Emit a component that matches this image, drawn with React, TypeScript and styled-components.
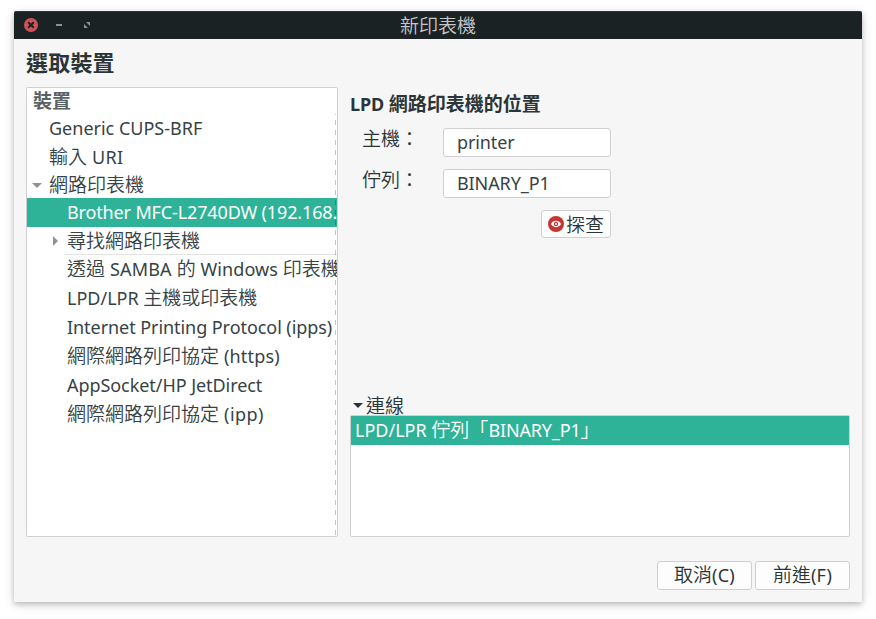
import React from "react";
import styled, { createGlobalStyle } from "styled-components";

const GlobalStyle = createGlobalStyle`
  * { box-sizing: border-box; }
  html, body { margin: 0; background: #fff; }
  body {
    font-family: "Noto Sans", "Noto Sans CJK TC", sans-serif;
    font-size: 18px;
    color: #2b3538;
    overflow: hidden;
  }
`;

const Desktop = styled.div`
  width: 876px;
  height: 619px;
  padding: 11px 14px 17px;
`;
const Window = styled.main`
  height: 591px;
  background: #f6f6f6;
  border-radius: 2px 2px 0 0;
  box-shadow: 0 2px 5px rgba(0, 0, 0, 0.2), 0 3px 12px rgba(0, 0, 0, 0.13);
  display: flex;
  flex-direction: column;
`;
const TitleBar = styled.header`
  height: 28px;
  flex: none;
  background: #1b2224;
  border-top: 1px solid #303739;
  border-radius: 2px 2px 0 0;
  display: grid;
  grid-template-columns: 96px 1fr 96px;
  align-items: center;
`;
const Controls = styled.div`
  display: flex;
  align-items: center;
  padding: 0 0 1px 9px;
  svg { display: block; }
`;
const Title = styled.div`
  text-align: center;
  line-height: 27px;
`;

/* CJK runs are drawn a little larger than the Latin ones beside them. */
const Text = styled.span<{ $size?: number; $track?: number; $shift?: number; $weight?: number; $color?: string }>`
  display: inline-block;
  white-space: pre;
  line-height: inherit;
  font-size: ${(p) => p.$size ?? 19}px;
  letter-spacing: ${(p) => p.$track ?? 0}px;
  font-weight: ${(p) => p.$weight ?? (p.$size ? 400 : 350)};
  color: ${(p) => p.$color ?? "inherit"};
  transform: ${(p) => (p.$shift ? `translateY(${p.$shift}px)` : "none")};
`;

const Content = styled.div`
  flex: 1;
  padding: 9px 12px 12px;
  display: flex;
  flex-direction: column;
`;
const Heading = styled.h1`
  margin: 0;
  height: 39px;
  font-size: 22px;
  line-height: 28px;
  letter-spacing: 0.2px;
  font-weight: 700;
`;
const Columns = styled.div`
  display: grid;
  grid-template-columns: 312px 500px;
  column-gap: 12px;
  height: 450px;
`;
const Tree = styled.section`
  position: relative;
  border: 1px solid #d0d0d0;
  border-radius: 2px;
  background: #fff;
  overflow: hidden;
`;
const TreeHeader = styled.div`
  height: 26px;
  line-height: 26px;
  padding-left: 6px;
  color: #596366;
`;
const TreeRow = styled.div<{ $h: number; $depth: number; $selected?: boolean; $ruled?: boolean }>`
  position: relative;
  height: ${(p) => p.$h}px;
  line-height: ${(p) => p.$h}px;
  display: flex;
  white-space: pre;
  padding-left: ${(p) => (p.$depth ? 22 : 4)}px;
  color: ${(p) => (p.$selected ? "#fff" : "#364245")};
  background: ${(p) => (p.$selected ? "#2eb398" : "transparent")};
  &::after {
    content: ${(p) => (p.$ruled ? '""' : "none")};
    position: absolute;
    left: 38px;
    right: 0;
    bottom: 0;
    border-bottom: 1px solid #e3e3e3;
  }
`;
const Arrow = styled.span`
  width: 18px;
  flex: none;
  display: flex;
  align-items: center;
`;
const DropGuide = styled.div`
  position: absolute;
  top: 26px;
  right: 1px;
  bottom: 0;
  width: 1px;
  background: repeating-linear-gradient(to bottom, rgba(0, 0, 0, 0.22) 0 5px, transparent 5px 10px);
  background-position: 0 -4px;
  background-size: 1px 10px;
`;

const Detail = styled.section`
  display: flex;
  flex-direction: column;
`;
const SectionTitle = styled.h2`
  margin: 0;
  height: 41px;
  line-height: 34px;
  font-size: 18px;
  font-weight: 700;
`;
const Field = styled.label`
  display: grid;
  grid-template-columns: 81px 168px;
  height: 29px;
  margin: 0 0 12px 12px;
  line-height: 22px;
`;
const Input = styled.div`
  border: 1px solid #d0d0d0;
  border-radius: 3px;
  background: #fff;
  padding-left: 13px;
  line-height: 27px;
  color: #364245;
`;
const Button = styled.button<{ $w: number; $h: number }>`
  width: ${(p) => p.$w}px;
  height: ${(p) => p.$h}px;
  padding: 0;
  border: 1px solid #d0d0d0;
  border-radius: 3px;
  background: #fdfdfd;
  color: #2b3538;
  font: inherit;
  line-height: 27px;
  display: flex;
  align-items: center;
  justify-content: center;
`;
const ProbeRow = styled.div`
  width: 261px;
  display: flex;
  justify-content: flex-end;
  button { gap: 2px; }
`;
const Expander = styled.div`
  margin-top: auto;
  height: 21px;
  padding-left: 2px;
  display: flex;
  align-items: center;
  line-height: 21px;
  gap: 2px;
`;
const Connections = styled.div`
  height: 122px;
  border: 1px solid #d0d0d0;
  border-radius: 2px;
  background: #fff;
`;
const Connection = styled.div`
  height: 29px;
  line-height: 29px;
  padding-left: 4px;
  background: #2eb398;
  color: #fff;
  white-space: pre;
  display: flex;
`;
const Actions = styled.footer`
  margin-top: 24px;
  display: flex;
  justify-content: flex-end;
  gap: 3px;
`;

type Run = [text: string, size?: number, track?: number];
type Row = { runs: Run[]; h: number; depth: 0 | 1; arrow?: "down" | "right"; selected?: boolean; ruled?: boolean; shift?: number };

const rows: Row[] = [
  { runs: [["Generic CUPS-BRF", 18]], h: 29, depth: 0 },
  { runs: [["輸入"], [" URI", 18, 0.3]], h: 28, depth: 0 },
  { runs: [["網路印表機"]], h: 27, depth: 0, arrow: "down", shift: 1 },
  { runs: [["Brother MFC-L2740DW (192.168.", 18, -0.14]], h: 29, depth: 1, selected: true },
  { runs: [["尋找網路印表機"]], h: 28, depth: 1, arrow: "right", ruled: true },
  { runs: [["透過"], [" SAMBA ", 18, 0.2], ["的"], [" Windows ", 18, 0.1], ["印表機"]], h: 29, depth: 1 },
  { runs: [["LPD/LPR ", 18], ["主機或印表機"]], h: 29, depth: 1 },
  { runs: [["Internet Printing Protocol (ipps)", 18, -0.06]], h: 29, depth: 1 },
  { runs: [["網際網路列印協定"], [" (https)", 18, 0.2]], h: 29, depth: 1 },
  { runs: [["AppSocket/HP JetDirect", 18, -0.06]], h: 29, depth: 1 },
  { runs: [["網際網路列印協定"], [" (ipp)", 18, 0.4]], h: 29, depth: 1 },
];

function Runs({ runs, shift, weight }: { runs: Run[]; shift?: number; weight?: number }) {
  return (
    <>
      {runs.map(([text, size, track], i) => (
        <Text key={i} $size={size} $track={track} $shift={shift} $weight={weight}>{text}</Text>
      ))}
    </>
  );
}

function Triangle({ dir, color }: { dir: "down" | "right"; color: string }) {
  return (
    <svg width="12" height="12" viewBox="0 0 12 12" fill={color}>
      <path d={dir === "down" ? "M1 4h10L6 9z" : "M4 1v10l5-5z"} />
    </svg>
  );
}

export default function App() {
  return (
    <>
      <GlobalStyle />
      <Desktop>
        <Window>
          <TitleBar>
            <Controls>
              <svg width="80" height="16" viewBox="0 0 80 16">
                <circle cx="8" cy="8" r="7" fill="#cf5259" />
                <path d="M5.2 5.2l5.6 5.6m0-5.6l-5.6 5.6" stroke="#1b2224" strokeWidth="2" />
                <path d="M33 7h6v2h-6z" fill="#8c9192" />
                <path d="M63 5h4v4zM61 7v4h4z" fill="#8c9192" />
              </svg>
            </Controls>
            <Title><Text $color="#c3c8c8" $shift={1}>新印表機</Text></Title>
          </TitleBar>
          <Content>
            <Heading>選取裝置</Heading>
            <Columns>
              <Tree>
                <TreeHeader><Text $weight={700}>裝置</Text></TreeHeader>
                {rows.map((row, i) => (
                  <TreeRow key={i} $h={row.h} $depth={row.depth} $selected={row.selected} $ruled={row.ruled}>
                    <Arrow>{row.arrow && <Triangle dir={row.arrow} color="#8e9495" />}</Arrow>
                    <Runs runs={row.runs} shift={row.shift} />
                  </TreeRow>
                ))}
                <DropGuide />
              </Tree>
              <Detail>
                <SectionTitle>
                  <Runs runs={[["LPD ", 18, -0.1], ["網路印表機的位置"]]} weight={700} />
                </SectionTitle>
                <Field>
                  <Text>主機：</Text>
                  <Input><Text $size={18} $track={-0.1}>printer</Text></Input>
                </Field>
                <Field>
                  <Text>佇列：</Text>
                  <Input><Text $size={18} $track={-0.1}>BINARY_P1</Text></Input>
                </Field>
                <ProbeRow>
                  <Button $w={70} $h={28}>
                    <svg width="16" height="16" viewBox="0 0 16 16">
                      <circle cx="8" cy="8" r="8" fill="#c33432" />
                      <path d="M3 8c2.2-4.2 7.8-4.2 10 0-2.2 4.2-7.8 4.2-10 0z" fill="#fff" />
                      <circle cx="8" cy="8" r="2.2" fill="#c33432" />
                      <circle cx="8" cy="8" r="1.1" fill="#fff" />
                    </svg>
                    <Text $shift={1}>探查</Text>
                  </Button>
                </ProbeRow>
                <Expander>
                  <Triangle dir="down" color="#2b3538" />
                  <Text $shift={2}>連線</Text>
                </Expander>
                <Connections>
                  <Connection>
                    <Runs runs={[["LPD/LPR ", 18], ["佇列「"], ["BINARY_P1", 18, -0.15], ["」"]]} />
                  </Connection>
                </Connections>
              </Detail>
            </Columns>
            <Actions>
              <Button $w={95} $h={29}><Runs runs={[["取消"], ["(C)", 18, 0.3]]} /></Button>
              <Button $w={95} $h={29}><Runs runs={[["前進"], ["(F)", 18, 0.2]]} /></Button>
            </Actions>
          </Content>
        </Window>
      </Desktop>
    </>
  );
}
